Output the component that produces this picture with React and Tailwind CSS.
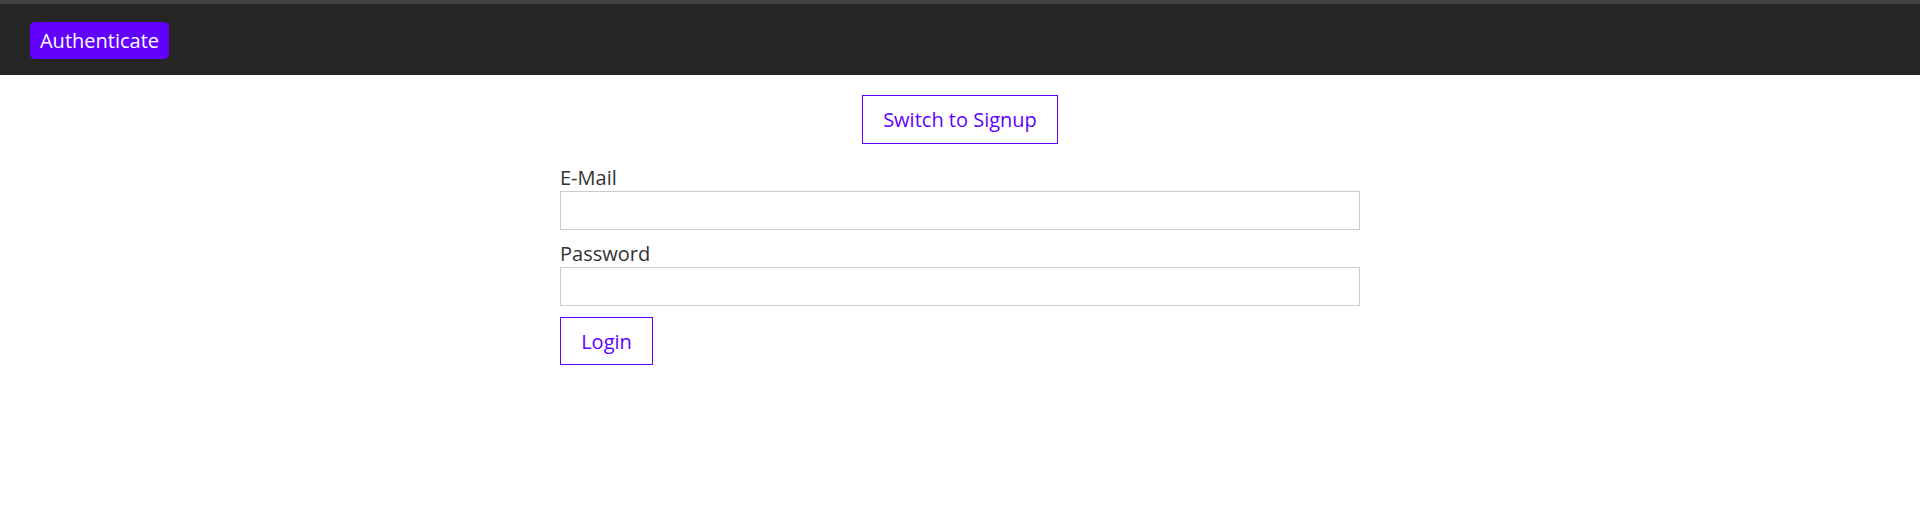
import React from "react";

const font = { fontFamily: '"Open Sans", "Noto Sans", sans-serif' };

const Field = ({ label, type, top }) => (
  <div className={`flex flex-col ${top}`}>
    <label className="text-[20px] leading-[27px] text-[#333] pt-[1px]">{label}</label>
    <input
      type={type}
      className="h-[39px] w-full border border-[#ccc] bg-white px-2 text-[18px] outline-none"
    />
  </div>
);

export default function App() {
  return (
    <div className="min-h-[515px] bg-white" style={font}>
      <div className="h-[4px] bg-[#444]" />
      <header className="h-[71px] bg-[#252525] px-[30px] flex items-center">
        <a
          href="#"
          className="h-[37px] w-[139px] rounded-[5px] bg-[#6200ff] text-white text-[20px] flex items-center justify-center mt-[2px]"
        >
          Authenticate
        </a>
      </header>
      <main className="flex flex-col items-center pt-[20px]">
        <button className="h-[49px] w-[196px] border border-[#6200ff] text-[#6200ff] text-[20px] flex items-center justify-center">
          Switch to Signup
        </button>
        <form className="w-[800px] mt-[19px]" onSubmit={e => e.preventDefault()}>
          <Field label="E-Mail" type="email" top="" />
          <Field label="Password" type="password" top="mt-[9px]" />
          <button className="mt-[11px] h-[48px] w-[93px] border border-[#6200ff] text-[#6200ff] text-[20px] flex items-center justify-center pt-[1px]">
            Login
          </button>
        </form>
      </main>
    </div>
  );
}
